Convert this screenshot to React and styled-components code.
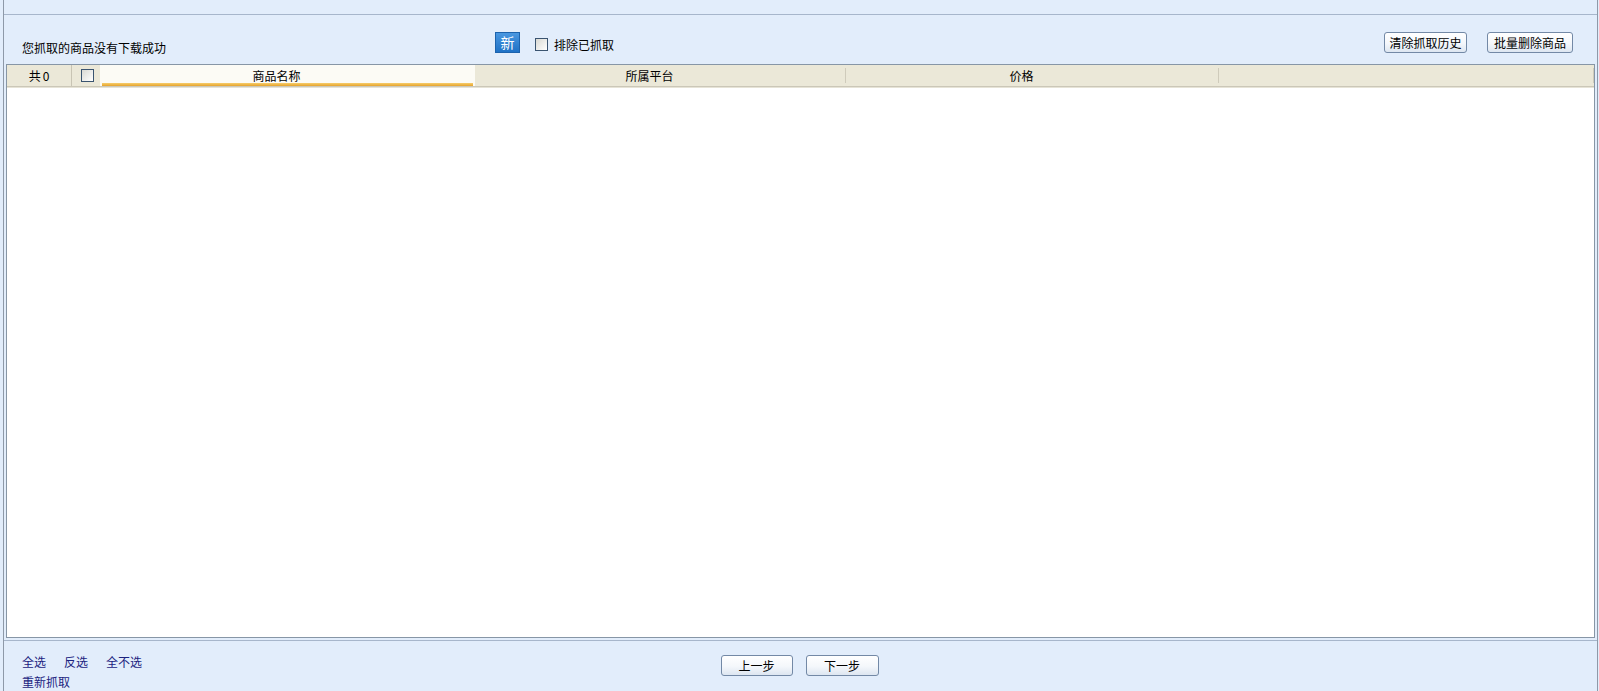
import styled, { createGlobalStyle } from "styled-components"

const GlobalStyle = createGlobalStyle`
  html, body {
    margin: 0;
    padding: 0;
    background: #e2edfb;
  }
  body {
    font-family: "Noto Sans CJK SC", "DejaVu Sans", sans-serif;
    font-size: 12px;
    color: #000;
  }
`

const Frame = styled.div`
  box-sizing: border-box;
  margin-left: 3px;
  width: 1595px;
  height: 691px;
  border-left: 1px solid #8e99a8;
  border-right: 1px solid #8e99a8;
  display: flex;
  flex-direction: column;
  overflow: hidden;
`

const TopStrip = styled.div`
  height: 14px;
  border-bottom: 1px solid #a7b6cb;
  flex-shrink: 0;
`

const Toolbar = styled.div`
  height: 49px;
  display: flex;
  align-items: flex-end;
  padding: 0 24px 11px 18px;
  box-sizing: border-box;
  flex-shrink: 0;
`

const Notice = styled.div`
  width: 473px;
  line-height: 13px;
  margin-bottom: -1px;
`

const NewBadge = styled.div`
  width: 25px;
  height: 21px;
  box-sizing: border-box;
  border: 1px solid #1c63ad;
  background: linear-gradient(#4997e0, #1f72c6);
  color: #fff;
  font-size: 14px;
  line-height: 19px;
  text-align: center;
`

const CheckLabel = styled.label`
  display: flex;
  align-items: center;
  gap: 6px;
  margin-left: 15px;
  margin-bottom: 2px;
  line-height: 13px;
`

const Box = styled.span`
  display: inline-block;
  width: 13px;
  height: 13px;
  box-sizing: border-box;
  border: 1px solid #3a5470;
  background: linear-gradient(135deg, #d9d9d3, #ffffff);
  flex-shrink: 0;
`

const Spacer = styled.div`
  flex: 1;
`

const Button = styled.button`
  box-sizing: border-box;
  height: 21px;
  width: ${(p) => p.$w}px;
  padding: 0;
  margin-left: ${(p) => p.$ml || 0}px;
  border: 1px solid #7389a6;
  border-radius: 3px;
  background: linear-gradient(#ffffff 0%, #f4f7fb 55%, #dde6f1 100%);
  font-family: inherit;
  font-size: 12px;
  color: #000;
  line-height: 18px;
  cursor: pointer;
`

const Table = styled.div`
  margin: 0 2px;
  height: 574px;
  box-sizing: border-box;
  border: 1px solid #8796a6;
  background: #fff;
  display: flex;
  flex-direction: column;
  flex-shrink: 0;
`

const HeaderRow = styled.div`
  display: flex;
  height: 21px;
  background: #ebe8d8;
  border-bottom: 1px solid #cbc7b8;
  box-shadow: 0 1px 0 #e6e3d6;
`

const HeadCell = styled.div`
  width: ${(p) => p.$w}px;
  flex: ${(p) => (p.$grow ? 1 : "none")};
  box-sizing: border-box;
  display: flex;
  align-items: center;
  justify-content: center;
  gap: 2px;
  padding-right: ${(p) => p.$pr || 0}px;
  padding-left: ${(p) => p.$pl || 0}px;
  position: relative;
  background: ${(p) => (p.$hot ? "#fcfbf5" : "transparent")};
  border-right: ${(p) => (p.$line ? "1px solid #c8c4b4" : "none")};
  &::after {
    content: "";
    display: ${(p) => (p.$hot ? "block" : "none")};
    position: absolute;
    left: 2px;
    right: 2px;
    bottom: 0;
    height: 3px;
    background: linear-gradient(#f7cd6b, #e5a32c);
  }
`

const Sep = styled.span`
  position: absolute;
  right: 0;
  top: 3px;
  bottom: 3px;
  width: 1px;
  background: #cfcbbb;
`

const TableBody = styled.div`
  flex: 1;
`

const Rule = styled.div`
  margin-top: 2px;
  height: 1px;
  background: #a7b6cb;
  flex-shrink: 0;
`

const Footer = styled.div`
  display: grid;
  grid-template-columns: 1fr auto 1fr;
  align-items: start;
  padding-top: 11px;
  margin-left: -4px;
  width: 1599px;
`

const Links = styled.div`
  padding-left: 22px;
  display: flex;
  flex-direction: column;
`

const LinkRow = styled.div`
  display: flex;
  gap: 18px;
  line-height: 20px;
`

const Link = styled.a`
  color: #1b237f;
  text-decoration: none;
  cursor: pointer;
`

const Steps = styled.div`
  display: flex;
  gap: 13px;
  padding-top: 3px;
`

export default function App() {
  return (
    <>
      <GlobalStyle />
      <Frame>
        <TopStrip />
        <Toolbar>
          <Notice>您抓取的商品没有下载成功</Notice>
          <NewBadge>新</NewBadge>
          <CheckLabel>
            <Box />
            排除已抓取
          </CheckLabel>
          <Spacer />
          <Button $w={83}>清除抓取历史</Button>
          <Button $w={86} $ml={20}>批量删除商品</Button>
        </Toolbar>
        <Table>
          <HeaderRow>
            <HeadCell $w={65} $line>
              <span>共</span>
              <span>0</span>
            </HeadCell>
            <HeadCell $w={28} $pl={2}>
              <Box />
            </HeadCell>
            <HeadCell $w={375} $hot $pr={22}>商品名称</HeadCell>
            <HeadCell $w={371} $pr={22}>
              所属平台
              <Sep />
            </HeadCell>
            <HeadCell $w={373} $pr={22}>
              价格
              <Sep />
            </HeadCell>
            <HeadCell $grow>
              <Sep />
            </HeadCell>
          </HeaderRow>
          <TableBody />
        </Table>
        <Rule />
        <Footer>
          <Links>
            <LinkRow>
              <Link>全选</Link>
              <Link>反选</Link>
              <Link>全不选</Link>
            </LinkRow>
            <LinkRow>
              <Link>重新抓取</Link>
            </LinkRow>
          </Links>
          <Steps>
            <Button $w={72}>上一步</Button>
            <Button $w={73}>下一步</Button>
          </Steps>
          <div />
        </Footer>
      </Frame>
    </>
  )
}
